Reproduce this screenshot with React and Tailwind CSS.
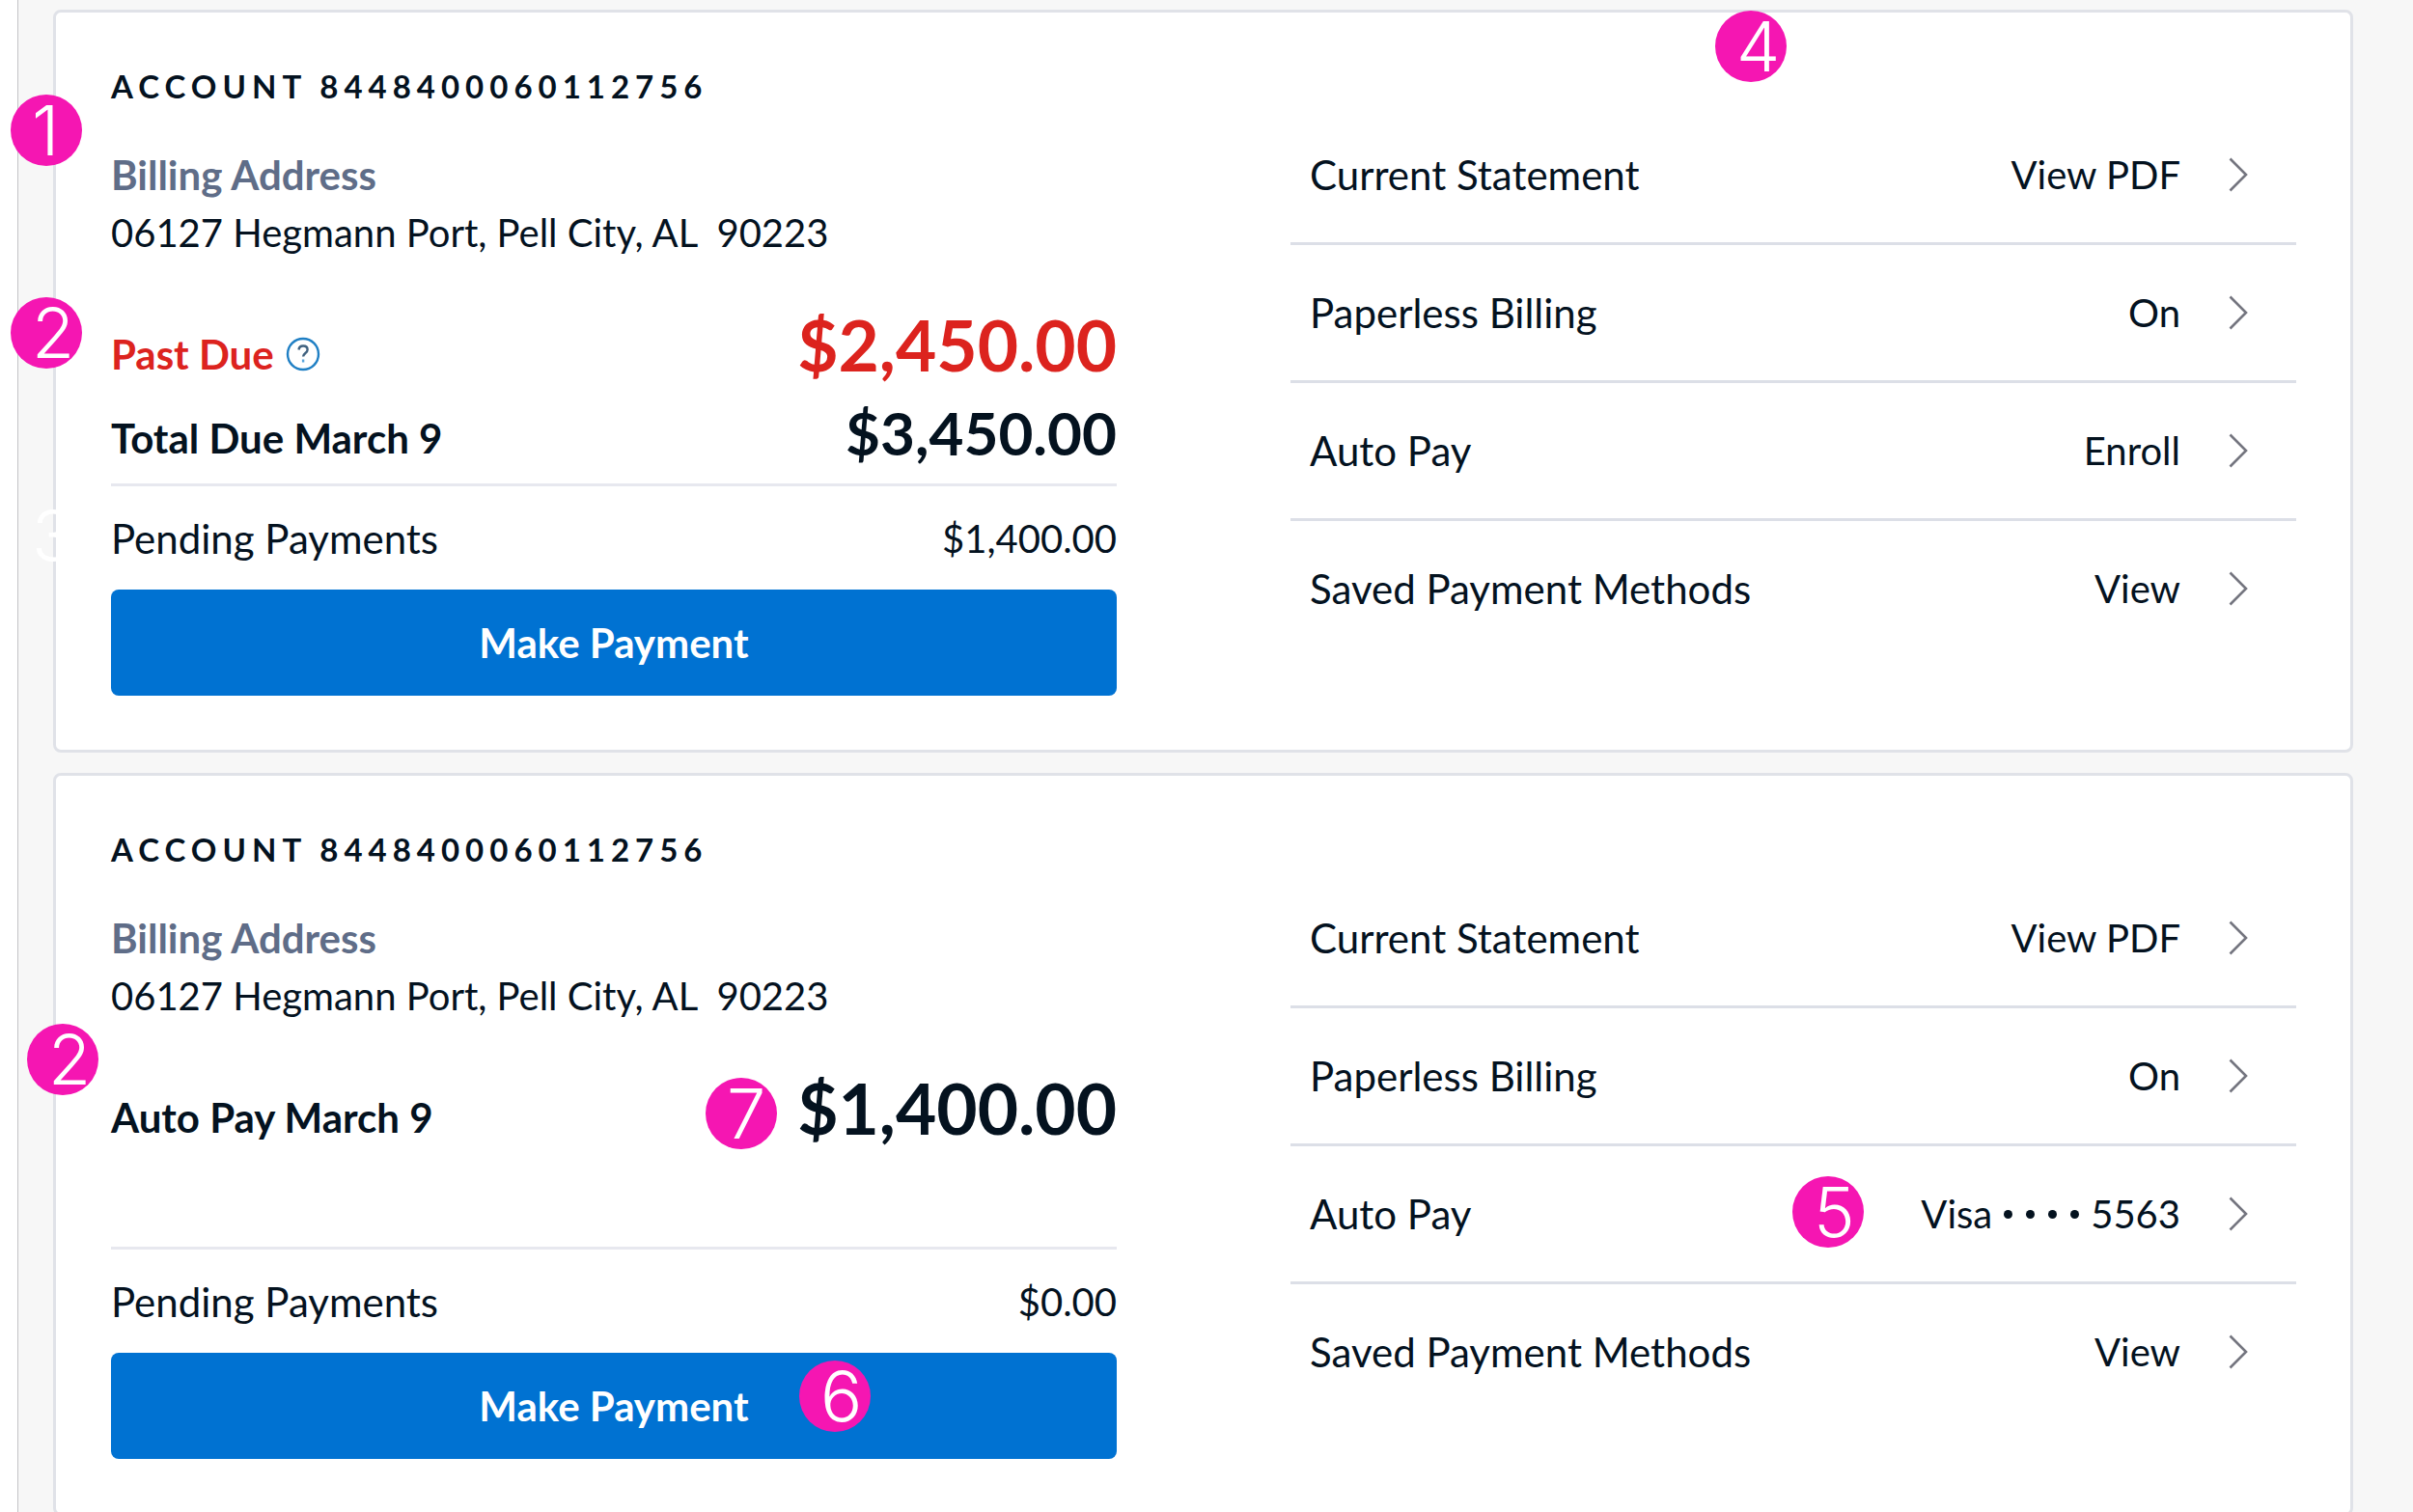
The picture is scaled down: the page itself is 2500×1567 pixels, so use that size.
const accounts = [
  {
    id: 'past-due',
    number: '8448400060112756',
    address: '06127 Hegmann Port, Pell City, AL\u00a0 90223',
    pastDue: '$2,450.00',
    due: { label: 'Total Due March 9', amount: '$3,450.00' },
    pending: '$1,400.00',
    autoPay: 'Enroll',
  },
  {
    id: 'auto-pay',
    number: '8448400060112756',
    address: '06127 Hegmann Port, Pell City, AL\u00a0 90223',
    due: { label: 'Auto Pay March 9', amount: '$1,400.00' },
    pending: '$0.00',
    autoPay: 'Visa',
    cardDigits: '5563',
    autoPayMarker: '5',
    paymentMarker: '6',
    amountMarker: '7',
  },
];

// Numbered callout that floats over the cards
const Marker = ({ number, className, color = 'bg-[#f516b2]' }) => (
  <span
    className={`absolute z-10 flex h-[74px] w-[74px] items-center rounded-full pl-[22px] font-[Inter] text-[72px] leading-[74px] font-[350] text-white ${color} ${className}`}
  >
    {number}
  </span>
);

const HelpIcon = () => (
  <svg viewBox="0 0 36 36" className="h-9 w-9" fill="none" stroke="#1f7fc4" strokeWidth="2.4">
    <circle cx="18" cy="18" r="16" />
    <path d="M13.5 13.5c.3-2.600 2-4 4.600-4s4.500 1.500 4.500 3.900c0 3.600-4.500 3.600-4.500 7.200" stroke="#41627f" />
    <path d="M18.100 23.500v3" stroke="#5aa5dc" />
  </svg>
);

const Chevron = () => (
  <svg viewBox="0 0 20 36" className="h-9 w-5" fill="none" stroke="#74757f" strokeWidth="2.600">
    <path d="M1.500 1.500 18 18 1.500 34.500" />
  </svg>
);

const SettingRow = ({ label, children }) => (
  <li className="border-b-[3px] border-[#dcdfe7] last:border-b-0">
    <a href="#" className="flex h-[140px] items-center pr-[50px] pl-5">
      <span className="text-[42px]">{label}</span>
      <span className="relative mr-[50px] ml-auto flex items-center">{children}</span>
      <Chevron />
    </a>
  </li>
);

const AccountCard = ({ account }) => (
  <section className="grid grid-cols-2 gap-[180px] rounded-lg border-[3px] border-[#e0e2e8] bg-white pr-[56px] pb-[56px] pl-[57px]">
    {/* Balance */}
    <div className="pt-[46px]">
      <h2 className="text-[33px] leading-[60px] font-bold tracking-[6px]">ACCOUNT {account.number}</h2>
      <h3 className="mt-8 text-[42px] leading-[60px] font-bold text-[#5f6d88]">Billing Address</h3>
      <p className="leading-[60px]">{account.address}</p>

      <div className="mt-[46px] min-h-[184px] text-[42px] font-bold">
        {account.pastDue ? (
          <>
            <div className="flex items-end justify-between text-[#dc231e]">
              <span className="flex items-center gap-3 leading-[60px]">
                Past Due
                <button type="button" aria-label="About past due">
                  <HelpIcon />
                </button>
              </span>
              <span className="text-[73px] leading-[80px]">{account.pastDue}</span>
            </div>
            <div className="mt-[15px] flex items-end justify-between">
              <span className="leading-[60px]">{account.due.label}</span>
              <span className="text-[62px] leading-[72px]">{account.due.amount}</span>
            </div>
          </>
        ) : (
          <div className="flex items-end justify-between">
            <span className="leading-[60px]">{account.due.label}</span>
            <span className="relative text-[73px] leading-[80px]">
              {account.due.amount}
              <Marker number={account.amountMarker} className="top-[9px] right-[352px]" />
            </span>
          </div>
        )}
      </div>

      <div className="flex justify-between border-t-[3px] border-[#e7e8ef] pt-6 leading-[60px]">
        <span className="text-[42px]">Pending Payments</span>
        <span>{account.pending}</span>
      </div>
      <button
        type="button"
        className="relative mt-[23px] h-[110px] w-full rounded-lg bg-[#0072d2] text-[42px] font-bold text-white"
      >
        Make Payment
        {account.paymentMarker && <Marker number={account.paymentMarker} className="top-2 right-[255px]" />}
      </button>
    </div>

    {/* Settings */}
    <ul className="pt-[98px]">
      <SettingRow label="Current Statement">View PDF</SettingRow>
      <SettingRow label="Paperless Billing">On</SettingRow>
      <SettingRow label="Auto Pay">
        {account.autoPayMarker && <Marker number={account.autoPayMarker} className="top-[-9px] right-[328px]" />}
        {account.autoPay}
        {account.cardDigits && (
          <>
            <span className="mx-3 flex gap-[14px]">
              <i className="h-[9px] w-[9px] rounded-full bg-[#04121f]" />
              <i className="h-[9px] w-[9px] rounded-full bg-[#04121f]" />
              <i className="h-[9px] w-[9px] rounded-full bg-[#04121f]" />
              <i className="h-[9px] w-[9px] rounded-full bg-[#04121f]" />
            </span>
            {account.cardDigits}
          </>
        )}
      </SettingRow>
      <SettingRow label="Saved Payment Methods">View</SettingRow>
    </ul>
  </section>
);

const App = () => (
  <div className="h-screen overflow-hidden bg-white pl-[18px] font-[Lato,sans-serif] text-[40px] text-[#04121f]">
    <main className="relative flex flex-col gap-[21px] border-l border-[#c4c4c6] bg-[#f7f7f7] pt-[10px] pr-[62px] pb-5 pl-9">
      {accounts.map((account) => (
        <AccountCard key={account.id} account={account} />
      ))}

      <Marker number="1" className="top-[98px] left-[-8px]" />
      <Marker number="2" className="top-[308px] left-[-8px]" />
      <Marker number="3" color="bg-transparent" className="top-[518px] left-[-8px]" />
      <Marker number="4" className="top-[11px] right-[649px]" />
      <Marker number="2" className="top-[1061px] left-[9px]" />
    </main>
  </div>
);

export default App;
